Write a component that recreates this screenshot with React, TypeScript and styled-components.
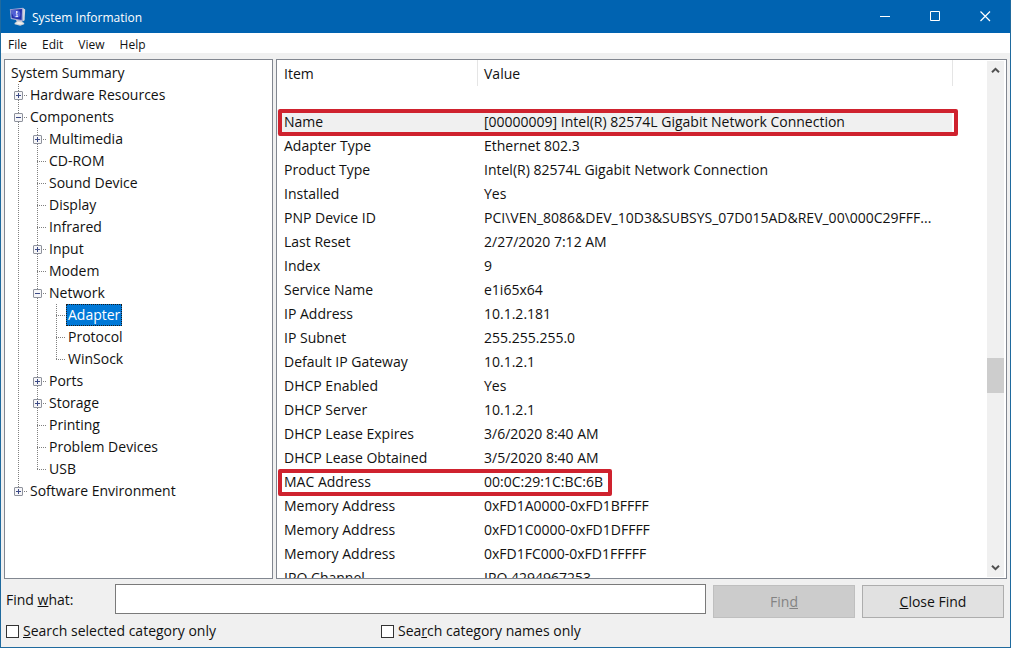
import React from "react";
import styled, { createGlobalStyle, css } from "styled-components";

const GlobalStyle = createGlobalStyle`
  *, *::before, *::after { box-sizing: border-box; }
  body {
    margin: 0;
    color: #111;
    background: #f0f0f0;
    font-family: "Open Sans", "Noto Sans", sans-serif;
    font-size: 14px;
    line-height: 22px;
  }
  button, input { font: inherit; color: inherit; }
`;

const Window = styled.div`
  display: flex;
  flex-direction: column;
  height: 100vh;
  border: solid #1f6a9e;
  border-width: 0 1px 1px;
  background: #f0f0f0;
`;

const TitleBar = styled.header`
  display: flex;
  align-items: center;
  flex: none;
  height: 33px;
  padding-left: 8px;
  color: #fff;
  background: #0063b1;
`;

const Title = styled.h1`
  flex: 1;
  margin: 0;
  padding: 2px 0 0 6px;
  font-size: 12px;
  font-weight: 400;
`;

const CaptionButton = styled.button`
  display: flex;
  align-items: center;
  justify-content: center;
  width: 50px;
  height: 33px;
  padding: 0;
  border: 0;
  background: transparent;
`;

const MenuBar = styled.nav`
  display: flex;
  flex: none;
  gap: 15px;
  height: 20px;
  padding-left: 7px;
  background: #fff;
`;

const MenuButton = styled.button`
  padding: 2px 0 0;
  border: 0;
  background: transparent;
  font-size: 12px;
  line-height: 20px;
`;

const Panes = styled.main`
  display: flex;
  flex: 1;
  gap: 3px;
  min-height: 0;
  padding: 6px 3px 0;
`;

const Pane = styled.section`
  display: flex;
  min-width: 0;
  overflow: hidden;
  border: 1px solid #828790;
  background: #fff;
`;

const TreePane = styled(Pane)`
  flex: 0 0 269px;
  padding: 2px 4px;
`;

const ListPane = styled(Pane)`
  flex: 1;
  padding: 0 1px 0 0;
`;

const Tree = styled.ul`
  margin: 0;
  padding: 0;
  list-style: none;
`;

const TreeRow = styled.li`
  display: flex;
  height: 22px;
`;

type Branch = "line" | "tee" | "end";

const dotsDown = "repeating-linear-gradient(#808080 0 1px, transparent 1px 2px)";
const dotsAcross = "repeating-linear-gradient(90deg, #808080 0 1px, transparent 1px 2px)";

const branchBackground: Record<Branch, string> = {
  line: `${dotsDown} 9px 0 / 1px 100% no-repeat`,
  tee: `${dotsDown} 9px 0 / 1px 100% no-repeat, ${dotsAcross} 9px 11px / 9px 1px no-repeat`,
  end: `${dotsDown} 9px 0 / 1px 11px no-repeat, ${dotsAcross} 9px 11px / 9px 1px no-repeat`,
};

const BranchCell = styled.span<{ $branch: Branch }>`
  flex: none;
  width: 19px;
  padding: 7px 5px;
  background: ${(p) => branchBackground[p.$branch]};
`;

const Expander = styled.button`
  display: block;
  width: 9px;
  height: 9px;
  padding: 0;
  border: 1px solid #8e929c;
  border-radius: 1px;
  background: #f6f6f8;
`;

const TreeLabel = styled.span<{ $selected?: boolean }>`
  padding: 0 1px;
  border: 1px solid transparent;
  line-height: 20px;
  white-space: nowrap;
  ${(p) =>
    p.$selected &&
    css`
      border: 1px dotted #1b1b1b;
      color: #fff;
      background: #0078d7;
    `}
`;

const TableArea = styled.div`
  flex: 1;
  min-width: 0;
  overflow: hidden;
`;

const Table = styled.table`
  width: 100%;
  table-layout: fixed;
  border-collapse: separate;
  border-spacing: 0;
`;

const ItemColumn = styled.col`
  width: 200px;
`;

const ValueColumn = styled.col`
  width: 475px;
`;

const HeadCell = styled.th`
  height: 26px;
  padding: 1px 6px 0;
  border-left: 1px solid #e5e5e5;
  font-weight: 400;
  text-align: left;
  &:first-child { border-color: transparent; }
`;

const Spacer = styled.td`
  height: 24px;
  padding: 0;
`;

const Cell = styled.td<{ $shaded?: boolean }>`
  position: relative;
  height: 24px;
  padding: 0 7px;
  line-height: 24px;
  white-space: nowrap;
  background: ${(p) => (p.$shaded ? "#f0f0f0" : "transparent")};
`;

const Callout = styled.span<{ $width: number }>`
  position: absolute;
  z-index: 1;
  top: -1px;
  bottom: -2px;
  left: 1px;
  width: ${(p) => p.$width}px;
  border: 4px solid #cf222e;
  border-radius: 2px;
  pointer-events: none;
`;

const ScrollBar = styled.div`
  display: flex;
  flex: none;
  flex-direction: column;
  justify-content: space-between;
  width: 17px;
  margin: 1px;
  background: #f0f0f0;
`;

const ScrollArrow = styled.button`
  display: flex;
  align-items: center;
  justify-content: center;
  width: 17px;
  height: 19px;
  padding: 0;
  border: 0;
  background: transparent;
`;

const ScrollTrack = styled.div`
  display: flex;
  flex: 1;
  flex-direction: column;
`;

const TrackSpace = styled.div<{ $share: number }>`
  flex: ${(p) => p.$share};
`;

const ScrollThumb = styled.div`
  height: 35px;
  background: #cdcdcd;
`;

const FindBar = styled.form`
  flex: none;
  padding: 5px 6px 6px 5px;
`;

const FindRow = styled.div`
  display: flex;
  gap: 7px;
  height: 34px;
`;

const FindLabel = styled.label`
  flex: none;
  width: 102px;
  line-height: 32px;
`;

const FindInput = styled.input`
  flex: 1;
  min-width: 0;
  height: 30px;
  padding: 0 6px;
  border: 1px solid #7a7a7a;
  border-radius: 0;
  background: #fff;
`;

const FindButton = styled.button`
  flex: none;
  width: 142px;
  height: 33px;
  margin-top: 1px;
  padding: 0;
  border: 1px solid #adadad;
  background: #e1e1e1;
  &:disabled {
    border-color: #bfbfbf;
    color: #838383;
    background: #cccccc;
  }
`;

const OptionRow = styled.div`
  display: grid;
  grid-template-columns: 375px 1fr;
  height: 20px;
  margin-top: 3px;
`;

const Option = styled.label`
  display: flex;
  align-items: center;
  gap: 4px;
  line-height: 20px;
`;

const CheckBox = styled.input`
  appearance: none;
  width: 13px;
  height: 13px;
  margin: 0;
  border: 1px solid #333;
  background: #fff;
`;

interface Node {
  label: string;
  branches: Branch[];
  state?: "open" | "closed";
  selected?: boolean;
}

const nodes: Node[] = [
  { label: "System Summary", branches: [] },
  { label: "Hardware Resources", branches: ["tee"], state: "closed" },
  { label: "Components", branches: ["tee"], state: "open" },
  { label: "Multimedia", branches: ["line", "tee"], state: "closed" },
  { label: "CD-ROM", branches: ["line", "tee"] },
  { label: "Sound Device", branches: ["line", "tee"] },
  { label: "Display", branches: ["line", "tee"] },
  { label: "Infrared", branches: ["line", "tee"] },
  { label: "Input", branches: ["line", "tee"], state: "closed" },
  { label: "Modem", branches: ["line", "tee"] },
  { label: "Network", branches: ["line", "tee"], state: "open" },
  { label: "Adapter", branches: ["line", "line", "tee"], selected: true },
  { label: "Protocol", branches: ["line", "line", "tee"] },
  { label: "WinSock", branches: ["line", "line", "end"] },
  { label: "Ports", branches: ["line", "tee"], state: "closed" },
  { label: "Storage", branches: ["line", "tee"], state: "closed" },
  { label: "Printing", branches: ["line", "tee"] },
  { label: "Problem Devices", branches: ["line", "tee"] },
  { label: "USB", branches: ["line", "end"] },
  { label: "Software Environment", branches: ["end"], state: "closed" },
];

interface Detail {
  item: string;
  value: string;
  shaded?: boolean;
  callout?: number;
}

const details: Detail[] = [
  { item: "Name", value: "[00000009] Intel(R) 82574L Gigabit Network Connection", shaded: true, callout: 680 },
  { item: "Adapter Type", value: "Ethernet 802.3" },
  { item: "Product Type", value: "Intel(R) 82574L Gigabit Network Connection" },
  { item: "Installed", value: "Yes" },
  { item: "PNP Device ID", value: "PCI\\VEN_8086&DEV_10D3&SUBSYS_07D015AD&REV_00\\000C29FFF..." },
  { item: "Last Reset", value: "2/27/2020 7:12 AM" },
  { item: "Index", value: "9" },
  { item: "Service Name", value: "e1i65x64" },
  { item: "IP Address", value: "10.1.2.181" },
  { item: "IP Subnet", value: "255.255.255.0" },
  { item: "Default IP Gateway", value: "10.1.2.1" },
  { item: "DHCP Enabled", value: "Yes" },
  { item: "DHCP Server", value: "10.1.2.1" },
  { item: "DHCP Lease Expires", value: "3/6/2020 8:40 AM" },
  { item: "DHCP Lease Obtained", value: "3/5/2020 8:40 AM" },
  { item: "MAC Address", value: "00:0C:29:1C:BC:6B", callout: 334 },
  { item: "Memory Address", value: "0xFD1A0000-0xFD1BFFFF" },
  { item: "Memory Address", value: "0xFD1C0000-0xFD1DFFFF" },
  { item: "Memory Address", value: "0xFD1FC000-0xFD1FFFFF" },
  { item: "IRQ Channel", value: "IRQ 4294967253" },
];

const AppIcon = () => (
  <svg width="17" height="19" viewBox="0 0 17 19" aria-hidden="true">
    <path d="M7 12.5h5.5l.8 2.6 1.9.9v1.2l-4 1.5-5.6-1.5v-1.3l2-.8z" fill="#cfd2d6" />
    <path d="M5.6 16l4-1 5.6 1-4 1.5z" fill="#f0f0ee" />
    <path d="M14 1l2.2 1.4-.6 10.8-2 1.3z" fill="#d4d7e0" />
    <path d="M.8 2.2L14.2.8l-.4 13.6L1.8 12z" fill="#a4acd8" />
    <path d="M1.8 3l11.2-1.1-.4 11L2.7 11z" fill="#2430a8" />
    <path d="M1.8 3l5-.5-.9 4.3-3.7 1z" fill="#5967cc" />
    <circle cx="7.6" cy="7" r="3.8" fill="#4f5ed6" />
    <circle cx="7.8" cy="5" r=".9" fill="#fff" />
    <path d="M6.8 6.8h1.2v2.6M6.5 9.5h2.6" stroke="#e6eaff" fill="none" />
  </svg>
);

const Mark = ({ open }: { open: boolean }) => (
  <svg width="7" height="7" viewBox="0 0 7 7" display="block" aria-hidden="true">
    <path d={open ? "M1 3.5h5" : "M1 3.5h5M3.5 1v5"} stroke="#3c4a86" />
  </svg>
);

const Chevron = ({ up }: { up?: boolean }) => (
  <svg width="9" height="7" viewBox="0 0 9 7" aria-hidden="true">
    <path d={up ? "M1 5.2L4.5 1.8 8 5.2" : "M1 1.8L4.5 5.2 8 1.8"} fill="none" stroke="#505050" strokeWidth="2" />
  </svg>
);

export default function App() {
  return (
    <>
      <GlobalStyle />
      <Window>
        <TitleBar>
          <AppIcon />
          <Title>System Information</Title>
          <CaptionButton aria-label="Minimize">
            <svg width="11" height="11" viewBox="0 0 11 11"><path d="M0 5.5h10" stroke="#fff" /></svg>
          </CaptionButton>
          <CaptionButton aria-label="Maximize">
            <svg width="11" height="11" viewBox="0 0 11 11"><path d="M.5.5h9v9h-9z" stroke="#fff" fill="none" /></svg>
          </CaptionButton>
          <CaptionButton aria-label="Close">
            <svg width="11" height="11" viewBox="0 0 11 11"><path d="M.5.5l9.500 9.500M10 .5L.5 10" stroke="#fff" strokeWidth="1.2" /></svg>
          </CaptionButton>
        </TitleBar>
        <MenuBar>
          {["File", "Edit", "View", "Help"].map((name) => (
            <MenuButton key={name}>{name}</MenuButton>
          ))}
        </MenuBar>
        <Panes>
          <TreePane>
            <Tree>
              {nodes.map((node) => (
                <TreeRow key={node.label}>
                  {node.branches.map((branch, i) => (
                    <BranchCell key={i} $branch={branch}>
                      {node.state && i === node.branches.length - 1 && (
                        <Expander aria-label={`Toggle ${node.label}`}>
                          <Mark open={node.state === "open"} />
                        </Expander>
                      )}
                    </BranchCell>
                  ))}
                  <TreeLabel $selected={node.selected}>{node.label}</TreeLabel>
                </TreeRow>
              ))}
            </Tree>
          </TreePane>
          <ListPane>
            <TableArea>
              <Table>
                <colgroup>
                  <ItemColumn />
                  <ValueColumn />
                  <col />
                </colgroup>
                <thead>
                  <tr>
                    <HeadCell>Item</HeadCell>
                    <HeadCell>Value</HeadCell>
                    <HeadCell as="td" />
                  </tr>
                </thead>
                <tbody>
                  <tr>
                    <Spacer colSpan={3} />
                  </tr>
                  {details.map((row, i) => (
                    <tr key={i}>
                      <Cell $shaded={row.shaded}>
                        {row.item}
                        {row.callout && <Callout $width={row.callout} />}
                      </Cell>
                      <Cell $shaded={row.shaded}>{row.value}</Cell>
                      <td />
                    </tr>
                  ))}
                </tbody>
              </Table>
            </TableArea>
            <ScrollBar>
              <ScrollArrow aria-label="Scroll up"><Chevron up /></ScrollArrow>
              <ScrollTrack>
                <TrackSpace $share={278} />
                <ScrollThumb />
                <TrackSpace $share={165} />
              </ScrollTrack>
              <ScrollArrow aria-label="Scroll down"><Chevron /></ScrollArrow>
            </ScrollBar>
          </ListPane>
        </Panes>
        <FindBar>
          <FindRow>
            <FindLabel htmlFor="find">Find <u>w</u>hat:</FindLabel>
            <FindInput id="find" type="text" />
            <FindButton type="submit" disabled>Fin<u>d</u></FindButton>
            <FindButton type="button"><u>C</u>lose Find</FindButton>
          </FindRow>
          <OptionRow>
            <Option>
              <CheckBox type="checkbox" />
              <span><u>S</u>earch selected category only</span>
            </Option>
            <Option>
              <CheckBox type="checkbox" />
              <span>Sea<u>r</u>ch category names only</span>
            </Option>
          </OptionRow>
        </FindBar>
      </Window>
    </>
  );
}
